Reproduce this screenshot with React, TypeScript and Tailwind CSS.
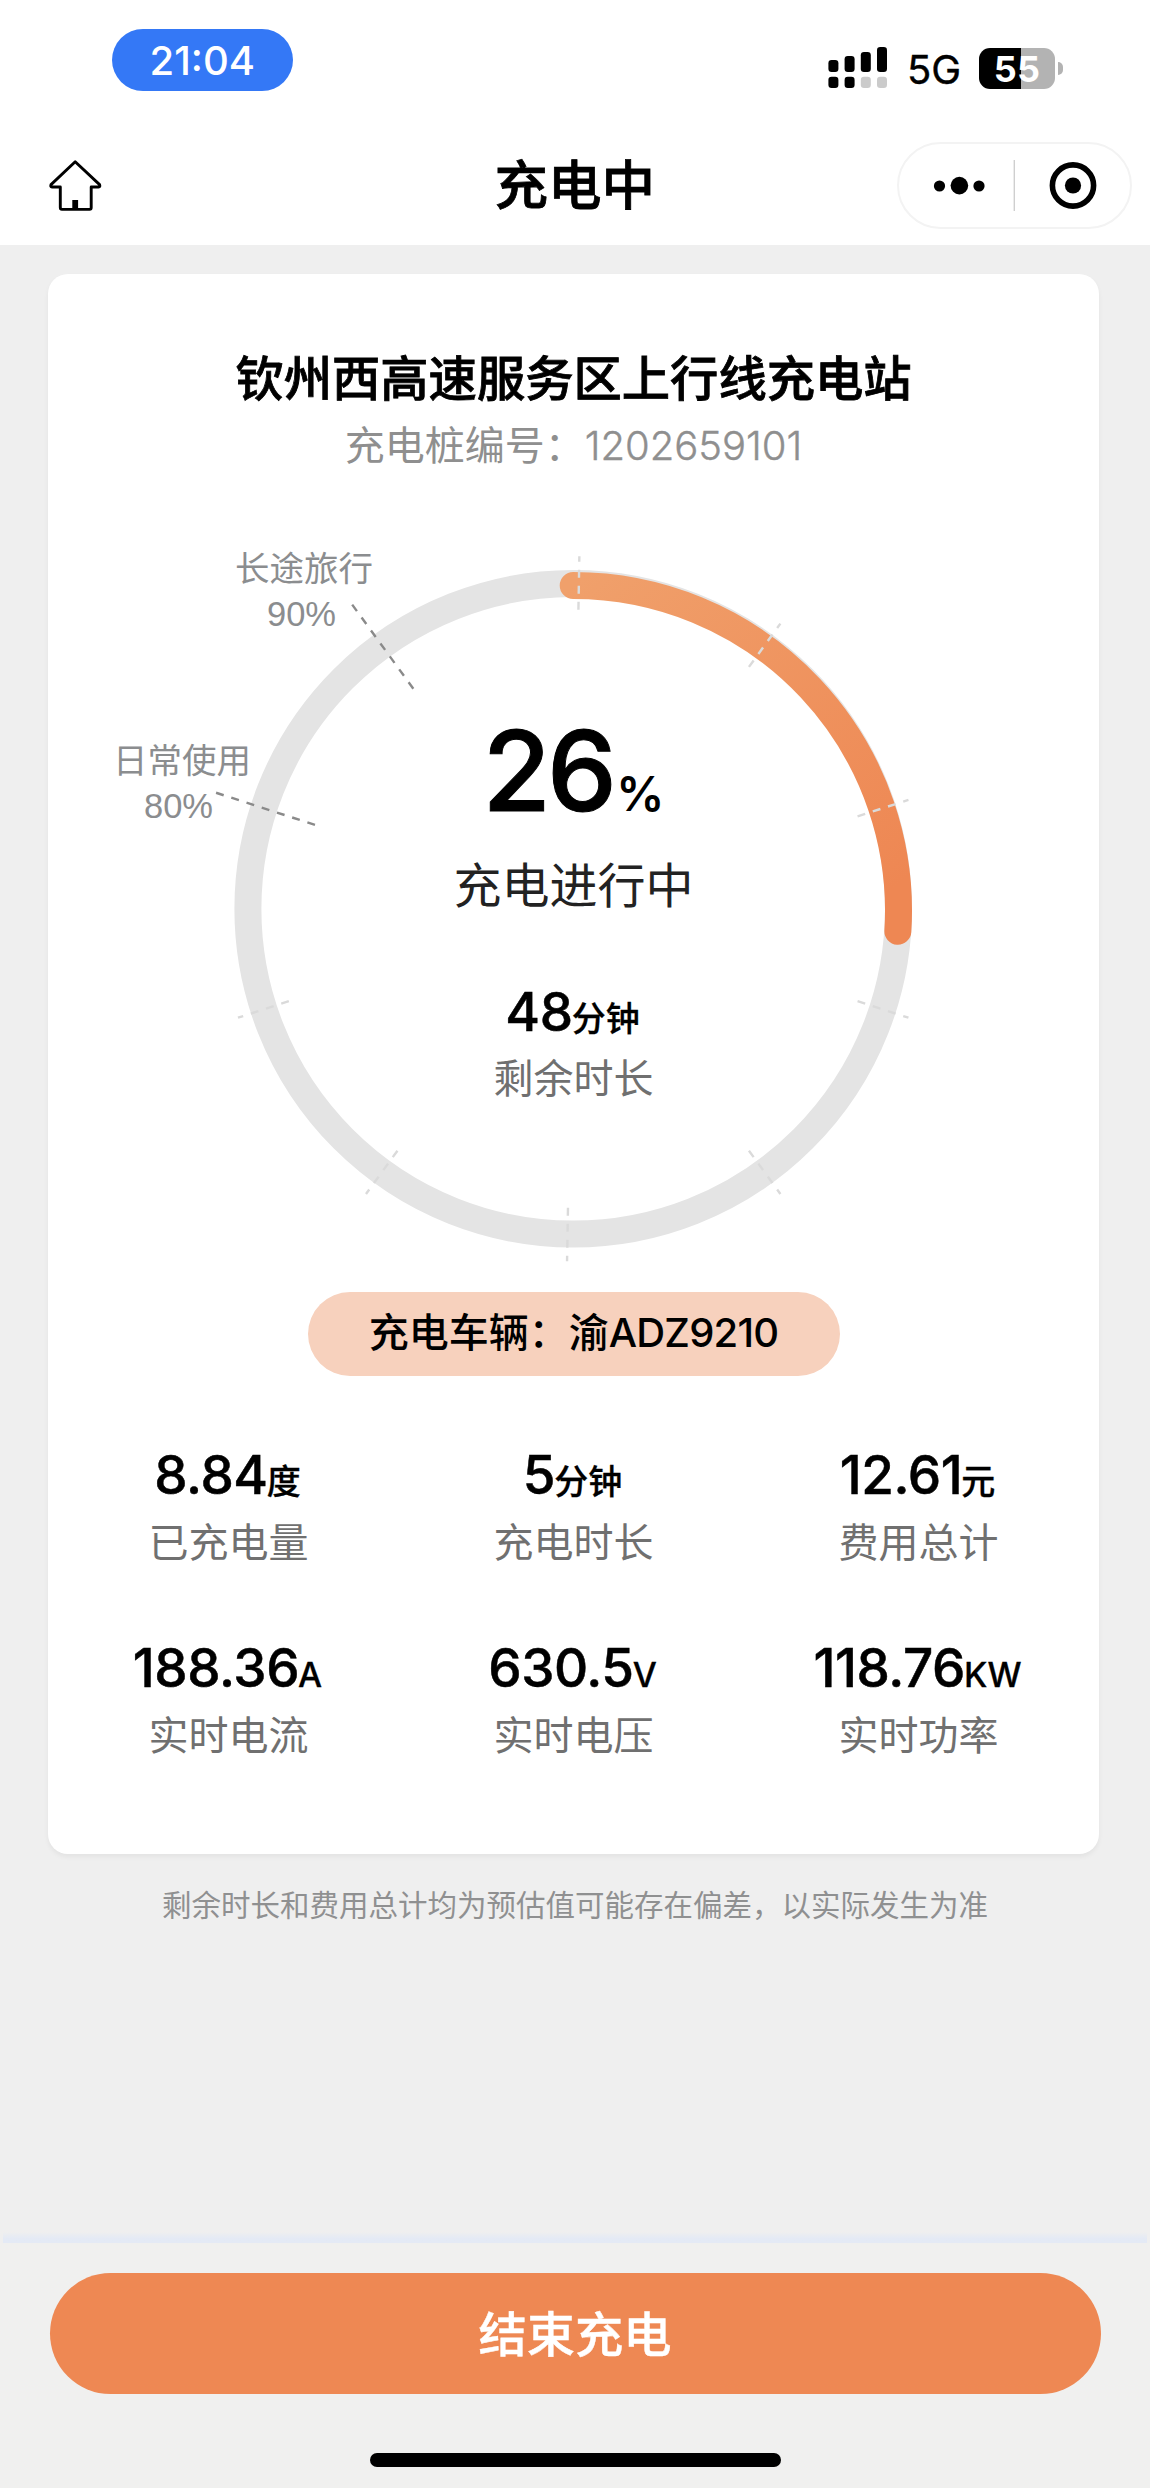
type Spoke = { angle: number; inner: number; outer: number; color: string };

const CX = 573.2;
const CY = 908.8;
const R = 325.3;

const spokes: Spoke[] = [
  ...[1, 36, 72, 108, 144, 181, 216, 252].map((angle) => ({ angle, inner: 299, outer: 352.5, color: '#dadada' })),
  { angle: 288, inner: 271.5, outer: 377, color: '#8a8a8a' },
  { angle: 324, inner: 272, outer: 377, color: '#8a8a8a' },
];

const polar = (angle: number, radius: number, cy = CY) => {
  const a = (angle * Math.PI) / 180;
  return { x: CX + radius * Math.sin(a), y: cy - radius * Math.cos(a) };
};

function Gauge({ percent }: { percent: number }) {
  const start = polar(0, R, CY + 2);
  const end = polar(percent * 3.6, R, CY + 2);
  return (
    <svg className="absolute inset-0 h-full w-full" viewBox="48 540 1051 730" fill="none">
      <defs>
        <linearGradient id="progress" gradientUnits="userSpaceOnUse" x1="590" y1="570" x2="880" y2="900">
          <stop offset="0" stopColor="#f0a06b" />
          <stop offset="1" stopColor="#ee8753" />
        </linearGradient>
      </defs>
      <circle cx={CX} cy={CY} r={R} stroke="#e4e4e4" strokeWidth="27" />
      <path
        d={`M${start.x} ${start.y}A${R} ${R} 0 0 1 ${end.x} ${end.y}`}
        stroke="url(#progress)"
        strokeWidth="27"
        strokeLinecap="round"
      />
      {spokes.map(({ angle, inner, outer, color }) => {
        const a = polar(angle, inner);
        const b = polar(angle, outer);
        return (
          <line key={angle} x1={a.x} y1={a.y} x2={b.x} y2={b.y} stroke={color} strokeWidth="2.4" strokeDasharray="8 8" />
        );
      })}
    </svg>
  );
}

function Value({ value, unit }: { value: string; unit: string }) {
  return (
    <div className="relative -left-px flex items-baseline justify-center font-medium text-black">
      <span className="text-[53px] leading-[60px] tracking-[-0.008em] [-webkit-text-stroke:0.5px]">{value}</span>
      <span className="-ml-px text-[34px] leading-none [-webkit-text-stroke:0.3px]">{unit}</span>
    </div>
  );
}

const stats = [
  { value: '8.84', unit: '度', label: '已充电量' },
  { value: '5', unit: '分钟', label: '充电时长' },
  { value: '12.61', unit: '元', label: '费用总计' },
  { value: '188.36', unit: 'A', label: '实时电流' },
  { value: '630.5', unit: 'V', label: '实时电压' },
  { value: '118.76', unit: 'KW', label: '实时功率' },
];

function SignalIcon() {
  const tops = [60, 56, 52, 47];
  return (
    <svg className="h-[42px] w-[60px]" viewBox="828 47 60 42">
      {tops.map((y, i) => (
        <g key={y}>
          <rect x={828.4 + i * 16.2} y={y} width="10" height={72 - y} rx="3.2" fill="#000" />
          <rect x={828.4 + i * 16.2} y="76.8" width="10" height="11.2" rx="3.2" fill={i < 2 ? '#000' : '#cbcbcb'} />
        </g>
      ))}
    </svg>
  );
}

function HomeIcon() {
  return (
    <svg className="h-[52px] w-[54px]" viewBox="48 159 54 52" fill="none">
      <path
        d="M75.2 161.8L51 184.6Q50.2 187 52 187H60.3V207.6Q60.3 209.4 62 209.4H89.6Q91.2 209.4 91.2 207.6V187H98.6Q100.4 187 99.6 184.6Z"
        stroke="#000"
        strokeWidth="2.9"
        strokeLinejoin="round"
      />
      <rect x="72.3" y="200" width="5.8" height="9" fill="#000" />
    </svg>
  );
}

export default function App() {
  return (
    <div className="flex h-[2488px] w-[1150px] flex-col overflow-hidden bg-[#efefef] font-['Inter','Noto_Sans_CJK_SC',sans-serif] text-black">
      <header className="h-[244.5px] bg-white">
        <div className="flex h-[119px] items-start pl-[111.5px] pt-[28.5px]">
          <div className="h-[62px] w-[181.5px] rounded-[31px] bg-[#3478f6] text-center text-[40px] font-medium leading-[63px] text-white">
            21:04
          </div>
          <div className="ml-[535px] mt-[18.5px] flex h-[42px] items-center">
            <SignalIcon />
            <span className="ml-[19px] mt-[3px] w-[52px] text-[40px] leading-[42px] [-webkit-text-stroke:0.4px]">5G</span>
            <div className="ml-[20px] h-[41px] w-[76px] rounded-[11px] bg-[linear-gradient(90deg,#000_55.5%,#b3b3b3_55.5%)] text-center text-[36px] font-bold leading-[42px] tracking-[0.01em] text-white">
              55
            </div>
            <div className="ml-[2.5px] h-[13px] w-[5px] rounded-r-[5px] bg-[#b3b3b3]" />
          </div>
        </div>
        <div className="flex h-[125px] items-start">
          <div className="ml-[48px] mt-[40px] h-[52px] w-[54px]">
            <HomeIcon />
          </div>
          <h1 className="ml-[392.5px] mt-[37px] w-[170px] text-[53.5px] font-medium leading-[60px] [-webkit-text-stroke:0.8px]">
            充电中
          </h1>
          <div className="ml-[232.5px] mt-[23px] flex h-[87px] w-[234.5px] items-center rounded-full border-2 border-[#f3f3f3]">
            <svg className="h-full w-full" viewBox="899 144 230.5 83">
              <circle cx="939.5" cy="186" r="5.6" />
              <circle cx="959.4" cy="185.6" r="8.8" />
              <circle cx="979" cy="186" r="5.6" />
              <rect x="1013.6" y="160" width="1.4" height="51" fill="#cfcfcf" />
              <circle cx="1073" cy="185.5" r="20.6" fill="none" stroke="#000" strokeWidth="5.6" />
              <circle cx="1073" cy="185.5" r="8.1" />
            </svg>
          </div>
        </div>
      </header>

      <main className="flex flex-1 flex-col pt-[29.5px]">
        <section className="ml-[48px] flex h-[1580px] w-[1051px] flex-col items-center rounded-[20px] bg-white pt-[74.5px] shadow-[0_3px_5px_rgba(0,0,0,0.05)]">
          <h2 className="text-[48.3px] font-medium leading-[60px] [-webkit-text-stroke:0.8px]">钦州西高速服务区上行线充电站</h2>
          <p className="mt-[12px] text-[40px] leading-[50px] text-[#8f8f8f]">
            充电桩编号：<span className="font-light [-webkit-text-stroke:0.4px]">1202659101</span>
          </p>

          <div className="relative mt-[69.5px] h-[730px] w-full">
            <Gauge percent={26} />
            <div className="absolute left-[187px] top-[9px] flex flex-col text-[34.5px] leading-[40px] text-[#8b8d8f]">
              <span>长途旅行</span>
              <span className="mt-[5px] pl-[32px] font-['Liberation_Sans'] text-[34.5px]">90%</span>
            </div>
            <div className="absolute left-[65px] top-[201px] flex flex-col text-[34.5px] leading-[40px] text-[#8b8d8f]">
              <span>日常使用</span>
              <span className="mt-[5px] pl-[31px] font-['Liberation_Sans'] text-[34.5px]">80%</span>
            </div>
            <div className="relative flex flex-col items-center pt-[175px]">
              <div className="flex items-baseline">
                <span className="text-[111px] font-medium leading-[112px] tracking-[-0.035em] [-webkit-text-stroke:1px]">26</span>
                <span className="ml-[3px] text-[48px] font-semibold leading-none">%</span>
              </div>
              <p className="mt-[30.5px] text-[48px] leading-[56px] text-[#222]">充电进行中</p>
              <div className="mt-[68.5px]">
                <Value value="48" unit="分钟" />
              </div>
              <p className="mt-[12px] text-[40px] leading-[50px] text-[#707070]">剩余时长</p>
            </div>
          </div>

          <div className="mt-[22px] h-[84px] w-[532px] rounded-full bg-[#f7d1bd] text-center text-[40px] font-medium leading-[82px]">
            充电车辆：渝<span className="tracking-[-0.02em]">ADZ9210</span>
          </div>

          <div className="mt-[69px] grid w-[1035px] grid-cols-3 gap-y-[70.5px]">
            {stats.map((s) => (
              <div key={s.label} className="text-center">
                <Value value={s.value} unit={s.unit} />
                <p className="mt-[12.5px] text-[40px] leading-[50px] text-[#707070]">{s.label}</p>
              </div>
            ))}
          </div>
        </section>

        <p className="mt-[31px] text-center text-[29.5px] leading-[40px] text-[#8f9091]">
          剩余时长和费用总计均为预估值可能存在偏差，以实际发生为准
        </p>
      </main>

      <footer className="h-[256px]">
        <div className="mx-[3px] h-[11px] bg-linear-to-b from-[#efefef] to-[#e4eaf5] to-60%" />
        <div className="flex h-[245px] flex-col items-center bg-[#f0f0ef] pt-[30px]">
          <button className="h-[121px] w-[1051px] rounded-full bg-[#ee8853] pt-[2px] text-[48.3px] font-medium leading-[60px] text-white [-webkit-text-stroke:0.4px]">
            结束充电
          </button>
          <div className="mt-[59px] h-[13.5px] w-[411px] rounded-full bg-black" />
        </div>
      </footer>
    </div>
  );
}
